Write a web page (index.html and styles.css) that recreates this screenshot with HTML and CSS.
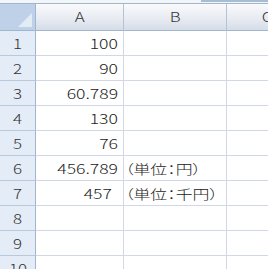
FILE: index.html
```html
<!DOCTYPE html>
<html lang="ja">
<head>
    <meta charset="UTF-8">
    <title>Sheet1</title>
    <link rel="stylesheet" href="styles.css">
</head>
<body>
    <div class="formula-edge"><div class="namebox-edge"></div></div>
    <div class="sheet">
        <div class="corner"></div>
        <div class="col-head"><span>A</span></div>
        <div class="col-head"><span>B</span></div>
        <div class="col-head"><span>C</span></div>

        <div class="row-head"><span>1</span></div>
        <div class="cell num"><span>100</span></div>
        <div class="cell"></div>
        <div class="cell"></div>

        <div class="row-head"><span>2</span></div>
        <div class="cell num"><span>90</span></div>
        <div class="cell"></div>
        <div class="cell"></div>

        <div class="row-head"><span>3</span></div>
        <div class="cell num"><span>60.789</span></div>
        <div class="cell"></div>
        <div class="cell"></div>

        <div class="row-head"><span>4</span></div>
        <div class="cell num"><span>130</span></div>
        <div class="cell"></div>
        <div class="cell"></div>

        <div class="row-head"><span>5</span></div>
        <div class="cell num"><span>76</span></div>
        <div class="cell"></div>
        <div class="cell"></div>

        <div class="row-head"><span>6</span></div>
        <div class="cell num"><span>456.789</span></div>
        <div class="cell txt"><span>（単位：円）</span></div>
        <div class="cell"></div>

        <div class="row-head"><span>7</span></div>
        <div class="cell num padded"><span>457</span></div>
        <div class="cell txt"><span>（単位：千円）</span></div>
        <div class="cell"></div>

        <div class="row-head"><span>8</span></div>
        <div class="cell"></div>
        <div class="cell"></div>
        <div class="cell"></div>

        <div class="row-head"><span>9</span></div>
        <div class="cell"></div>
        <div class="cell"></div>
        <div class="cell"></div>

        <div class="row-head"><span>10</span></div>
        <div class="cell"></div>
        <div class="cell"></div>
        <div class="cell"></div>
    </div>
</body>
</html>
```

FILE: styles.css
```css
html, body {
    overflow: hidden;
}
body {
    margin: 0;
    background: #fff;
    font-family: "Noto Sans CJK JP", sans-serif;
    font-weight: 300;
    color: #222;
}
.formula-edge {
    height: 3px;
    background: #f4f5f7;
    border-bottom: 1px solid #9eb6ce;
    display: flex;
    justify-content: flex-end;
}
.namebox-edge {
    width: 67px;
    height: 2px;
    background: #a9bcd2;
}
.sheet {
    display: grid;
    width: 309px;
    grid-template-columns: 36px 88px 103px 82px;
    grid-template-rows: 27px;
    grid-auto-rows: 25px;
}
.sheet > div {
    box-sizing: border-box;
    border-right: 1px solid #d0d7e5;
    border-bottom: 1px solid #d0d7e5;
    white-space: nowrap;
}
.sheet span {
    display: inline-block;
}
.corner {
    position: relative;
    background: #bfd1e8;
    border-right-color: #9eb6ce !important;
    border-bottom-color: #9eb6ce !important;
}
.corner::after {
    content: "";
    position: absolute;
    right: 3px;
    bottom: 3px;
    width: 14px;
    height: 14px;
    background: #e3ebf5;
    clip-path: polygon(100% 0, 100% 100%, 0 100%);
}
.col-head,
.row-head {
    display: flex;
    align-items: center;
    justify-content: center;
    font-size: 13px;
    color: #333;
}
.col-head span,
.row-head span {
    transform: scaleX(1.3);
}
.col-head {
    background: linear-gradient(#f9fafc, #e6eaf1 60%, #d6dde8);
    border-right-color: #b3c3d6 !important;
    border-bottom-color: #9eb6ce !important;
    padding-bottom: 1px;
}
.row-head {
    background: #e4ecf7;
    border-right-color: #9eb6ce !important;
    border-bottom-color: #b9c9dc !important;
}
.cell {
    display: flex;
    align-items: center;
    font-size: 13px;
}
.num {
    justify-content: flex-end;
    padding-right: 5px;
}
.num span {
    transform: scaleX(1.35);
    transform-origin: right center;
}
.num.padded {
    padding-right: 11px;
}
.txt {
    padding-left: 1px;
    font-size: 13px;
    font-feature-settings: "palt";
}
.txt span {
    transform: scaleX(1.3);
    transform-origin: left center;
}
```
